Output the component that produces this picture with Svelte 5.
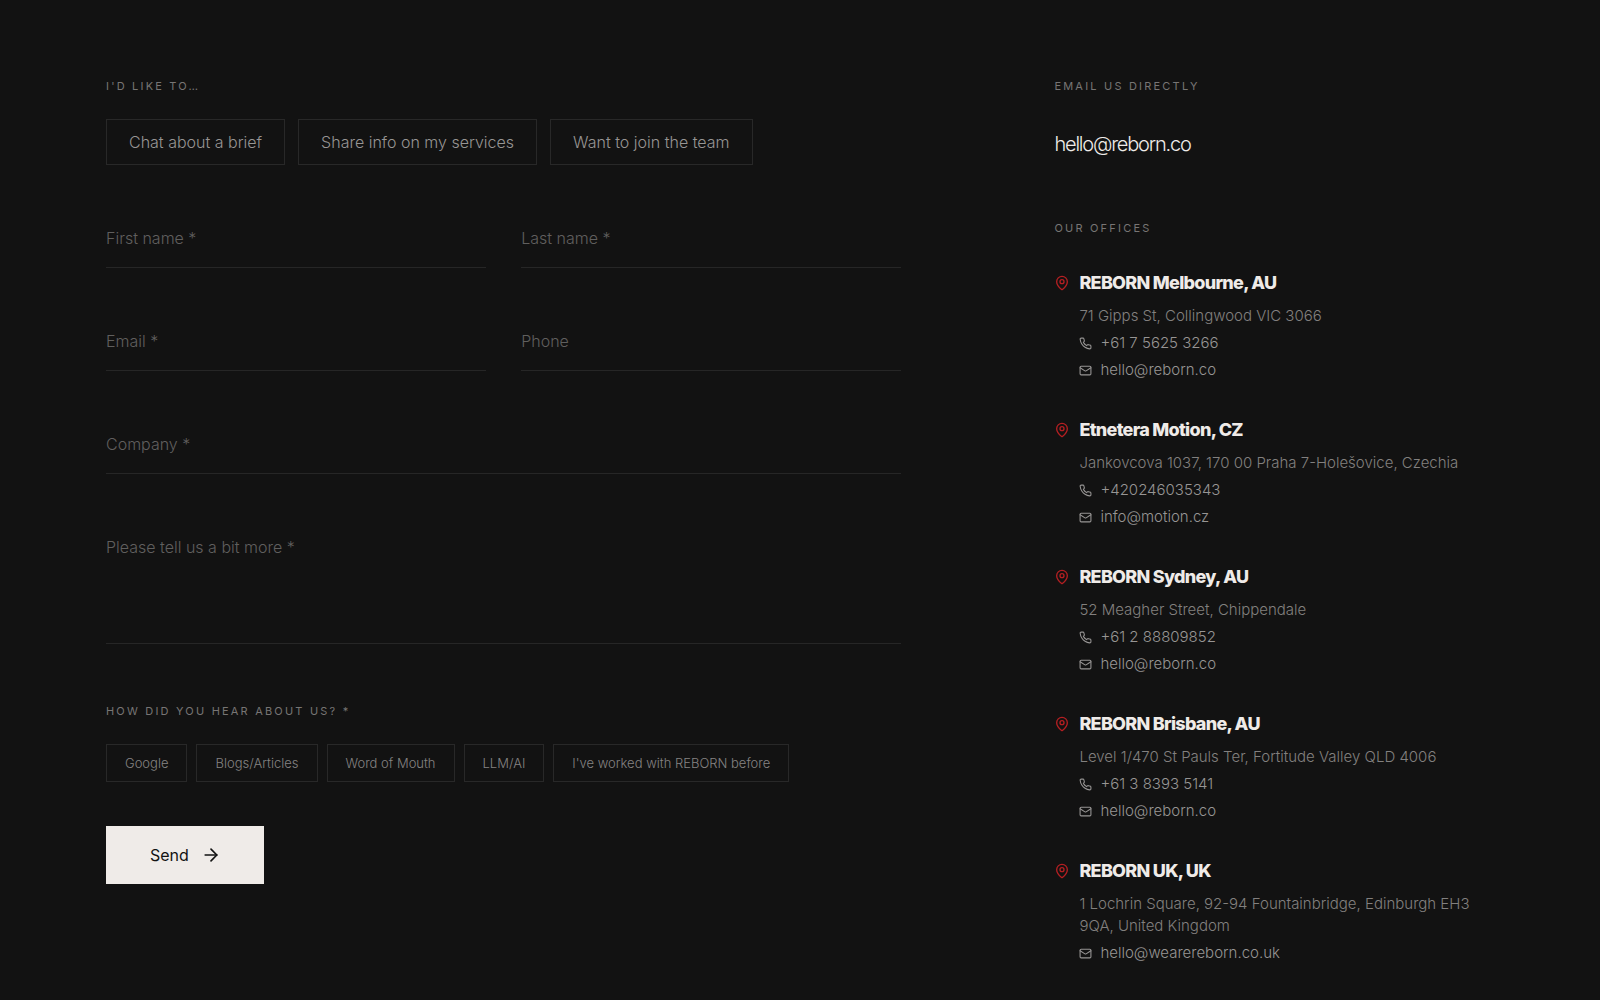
<script lang="ts">
	const topics = ['Chat about a brief', 'Share info on my services', 'Want to join the team'];
	const sources = ['Google', 'Blogs/Articles', 'Word of Mouth', 'LLM/AI', "I've worked with REBORN before"];

	const fields = [
		{ id: 'first-name', label: 'First name *', type: 'text' },
		{ id: 'last-name', label: 'Last name *', type: 'text' },
		{ id: 'email', label: 'Email *', type: 'email' },
		{ id: 'phone', label: 'Phone', type: 'tel' },
		{ id: 'company', label: 'Company *', type: 'text', wide: true }
	];

	const offices = [
		{ name: 'REBORN Melbourne, AU', address: '71 Gipps St, Collingwood VIC 3066', phone: '+61 7 5625 3266', email: 'hello@reborn.co' },
		{ name: 'Etnetera Motion, CZ', address: 'Jankovcova 1037, 170 00 Praha 7-Holešovice, Czechia', phone: '+420246035343', email: 'info@motion.cz' },
		{ name: 'REBORN Sydney, AU', address: '52 Meagher Street, Chippendale', phone: '+61 2 88809852', email: 'hello@reborn.co' },
		{ name: 'REBORN Brisbane, AU', address: 'Level 1/470 St Pauls Ter, Fortitude Valley QLD 4006', phone: '+61 3 8393 5141', email: 'hello@reborn.co' },
		{ name: 'REBORN UK, UK', address: '1 Lochrin Square, 92-94 Fountainbridge, Edinburgh EH3 9QA, United Kingdom', phone: '', email: 'hello@wearereborn.co.uk' }
	];

	let topic = $state('');
	let source = $state('');
	let values: Record<string, string> = $state({});
</script>

<main>
	<form onsubmit={(e) => e.preventDefault()}>
		<h2 id="topic-title">I'd like to…</h2>
		<div class="topics" role="group" aria-labelledby="topic-title">
			{#each topics as t}
				<button type="button" class:active={topic === t} aria-pressed={topic === t} onclick={() => (topic = t)}>{t}</button>
			{/each}
		</div>

		<div class="fields">
			{#each fields as f}
				<div class="field" class:wide={f.wide} class:filled={values[f.id]}>
					<input id={f.id} type={f.type} bind:value={values[f.id]} />
					<label for={f.id}>{f.label}</label>
				</div>
			{/each}
			<div class="field wide" class:filled={values.message}>
				<textarea id="message" bind:value={values.message}></textarea>
				<label for="message">Please tell us a bit more *</label>
			</div>
		</div>

		<h2 id="source-title">How did you hear about us? *</h2>
		<div class="sources" role="group" aria-labelledby="source-title">
			{#each sources as s}
				<button type="button" class:active={source === s} aria-pressed={source === s} onclick={() => (source = s)}>{s}</button>
			{/each}
		</div>

		<button class="send" type="submit">
			Send
			<svg width="20" height="20" viewBox="0 0 24 24" aria-hidden="true">
				<path d="M5 12h14" />
				<path d="m12 5 7 7-7 7" />
			</svg>
		</button>
	</form>

	<aside>
		<h2>Email us directly</h2>
		<a class="direct" href="mailto:hello@reborn.co">hello@reborn.co</a>

		<h2>Our offices</h2>
		<ul>
			{#each offices as office}
				<li>
					<h3>
						<svg class="pin" width="16" height="16" viewBox="0 0 24 24" aria-hidden="true">
							<path d="M20 10c0 4.993-5.539 10.193-7.399 11.799a1 1 0 0 1-1.202 0C9.539 20.193 4 14.993 4 10a8 8 0 0 1 16 0" />
							<circle cx="12" cy="10" r="3" />
						</svg>
						{office.name}
					</h3>
					<div class="details">
						<p>{office.address}</p>
						{#if office.phone}
							<a href="tel:{office.phone.replaceAll(' ', '')}">
								<svg width="13" height="13" viewBox="0 0 24 24" aria-hidden="true">
									<path d="M22 16.92v3a2 2 0 0 1-2.18 2 19.79 19.79 0 0 1-8.63-3.07 19.5 19.5 0 0 1-6-6 19.79 19.79 0 0 1-3.07-8.67A2 2 0 0 1 4.11 2h3a2 2 0 0 1 2 1.72 12.84 12.84 0 0 0 .7 2.81 2 2 0 0 1-.45 2.11L8.09 9.91a16 16 0 0 0 6 6l1.27-1.27a2 2 0 0 1 2.11-.45 12.84 12.84 0 0 0 2.81.7A2 2 0 0 1 22 16.92z" />
								</svg>
								{office.phone}
							</a>
						{/if}
						<a href="mailto:{office.email}">
							<svg width="13" height="13" viewBox="0 0 24 24" aria-hidden="true">
								<rect width="20" height="16" x="2" y="4" rx="2" />
								<path d="m22 7-8.97 5.7a1.94 1.94 0 0 1-2.06 0L2 7" />
							</svg>
							{office.email}
						</a>
					</div>
				</li>
			{/each}
		</ul>
	</aside>
</main>

<style>
:global(body) {
	background: #121212;
}

main {
	display: grid;
	grid-template-columns: 38fr 21fr;
	gap: 153px;
	padding: 78px 106px 36px;
	font-family: Inter, "Liberation Sans", sans-serif;
	font-size: 15px;
	font-weight: 300;
	line-height: 22px;
	color: #979594;
}

h2, h3, p, ul {
	margin: 0;
	padding: 0;
}

h2 {
	font-size: 11px;
	font-weight: 400;
	line-height: 16px;
	letter-spacing: 0.2em;
	text-transform: uppercase;
	color: #777574;
}

svg {
	flex: none;
	fill: none;
	stroke: currentColor;
	stroke-width: 2;
	stroke-linecap: round;
	stroke-linejoin: round;
}

a {
	color: inherit;
	text-decoration: none;
}

button, input, textarea {
	font: inherit;
	color: inherit;
	background: none;
	border: 0;
	border-radius: 0;
	outline: none;
}

button {
	cursor: pointer;
}

.topics, .sources {
	display: flex;
	flex-wrap: wrap;
	margin-top: 25px;
}

.topics {
	gap: 13px;
}

.sources {
	gap: 9px;
}

.topics button, .sources button {
	border: 1px solid #282828;
}

.topics button {
	padding: 11px 22px;
	font-size: 16px;
}

.sources button {
	padding: 8px 18px;
	font-size: 13px;
	line-height: 20px;
	color: #858382;
}

.topics .active, .sources .active {
	border-color: #efebe8;
	color: #efebe8;
}

.fields {
	display: grid;
	grid-template-columns: 1fr 1fr;
	gap: 61px 35px;
	margin: 62px 0 59px;
	font-size: 16px;
}

.field {
	position: relative;
	display: flex;
}

.wide {
	grid-column: 1 / -1;
}

.field label {
	position: absolute;
	top: 0;
	left: 0;
	color: #605f5e;
	pointer-events: none;
}

.filled label {
	display: none;
}

input, textarea {
	width: 100%;
	padding: 0 0 16px;
	line-height: 24px;
	border-bottom: 1px solid #262626;
}

input {
	height: 24px;
	margin-bottom: 1px;
}

textarea {
	height: 91px;
	resize: none;
}

.send {
	display: flex;
	align-items: center;
	gap: 12px;
	margin-top: 44px;
	padding: 18px 43px 18px 44px;
	font-size: 16px;
	font-weight: 400;
	background: #efebe8;
	color: #121212;
}

.direct {
	display: block;
	margin: 36px 0 62px;
	font-size: 20px;
	line-height: 28px;
	letter-spacing: -0.06em;
	color: #efebe8;
}

ul {
	display: grid;
	gap: 37px;
	margin-top: 35px;
	list-style: none;
}

h3 {
	display: flex;
	align-items: center;
	gap: 9px;
	margin-bottom: 10px;
	font-size: 18px;
	font-weight: 800;
	line-height: 24px;
	letter-spacing: -0.04em;
	color: #efebe8;
}

.pin {
	color: #b51f22;
}

.details {
	display: grid;
	gap: 5px;
	padding-left: 25px;
}

.details p {
	color: #82807f;
}

.details a {
	display: flex;
	align-items: center;
	gap: 8px;
}
</style>
